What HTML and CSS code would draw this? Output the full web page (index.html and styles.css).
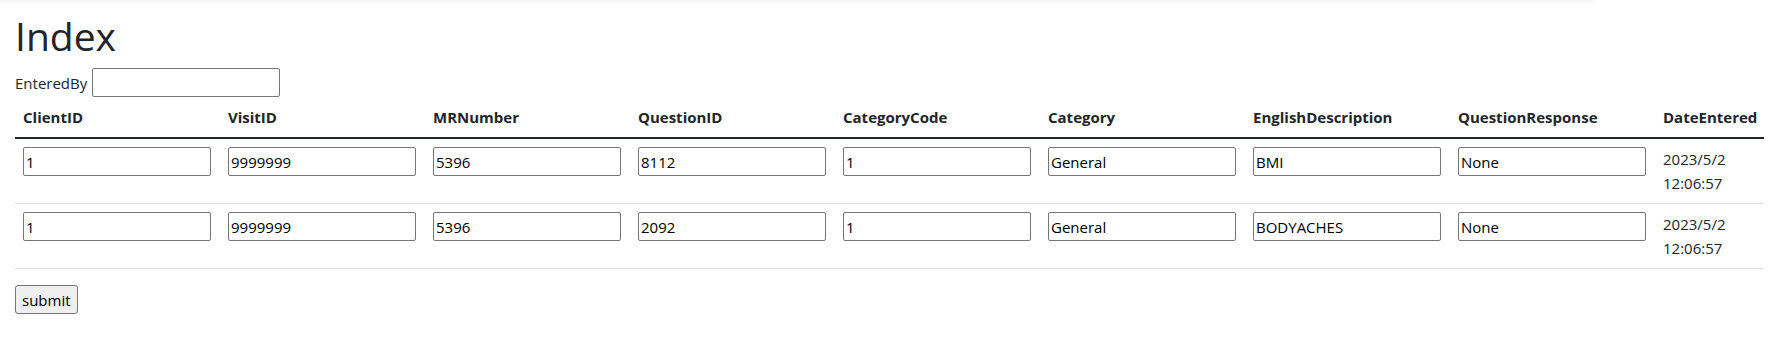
FILE: index.html
```html
<!DOCTYPE html>
<html lang="en">
<head>
    <meta charset="UTF-8">
    <meta name="viewport" content="width=device-width, initial-scale=1.0">
    <title>Index</title>
    <link rel="stylesheet" href="styles.css">
</head>
<body>
    <div class="top-shade"></div>
    <div class="container">
        <h1>Index</h1>
        <form class="entry-form">
            <div class="entered-by">
                <label for="entered-by">EnteredBy</label>
                <input type="text" id="entered-by" class="field-short">
            </div>
            <table class="question-table">
                <colgroup>
                    <col class="col-field"><col class="col-field"><col class="col-field">
                    <col class="col-field"><col class="col-field"><col class="col-field">
                    <col class="col-field"><col class="col-field"><col class="col-date">
                </colgroup>
                <thead>
                    <tr>
                        <th>ClientID</th>
                        <th>VisitID</th>
                        <th>MRNumber</th>
                        <th>QuestionID</th>
                        <th>CategoryCode</th>
                        <th>Category</th>
                        <th>EnglishDescription</th>
                        <th>QuestionResponse</th>
                        <th>DateEntered</th>
                    </tr>
                </thead>
                <tbody>
                    <tr>
                        <td><input type="text" value="1"></td>
                        <td><input type="text" value="9999999"></td>
                        <td><input type="text" value="5396"></td>
                        <td><input type="text" value="8112"></td>
                        <td><input type="text" value="1"></td>
                        <td><input type="text" value="General"></td>
                        <td><input type="text" value="BMI"></td>
                        <td><input type="text" value="None"></td>
                        <td>2023/5/2 12:06:57</td>
                    </tr>
                    <tr>
                        <td><input type="text" value="1"></td>
                        <td><input type="text" value="9999999"></td>
                        <td><input type="text" value="5396"></td>
                        <td><input type="text" value="2092"></td>
                        <td><input type="text" value="1"></td>
                        <td><input type="text" value="General"></td>
                        <td><input type="text" value="BODYACHES"></td>
                        <td><input type="text" value="None"></td>
                        <td>2023/5/2 12:06:57</td>
                    </tr>
                </tbody>
            </table>
            <button type="button" class="submit-button">submit</button>
        </form>
    </div>
</body>
</html>
```

FILE: styles.css
```css
body, html {
    margin: 0;
    font-family: "Segoe UI", "Open Sans", "Noto Sans", sans-serif;
    font-size: 15px;
    line-height: 24px;
    color: #212529;
    background-color: #fff;
}
.top-shade {
    width: 1595px;
    height: 6px;
    background: linear-gradient(to bottom, rgba(0, 0, 0, 0.035), rgba(0, 0, 0, 0));
}
.container {
    padding: 0 10px 0 15px;
}
h1 {
    font-size: 39px;
    font-weight: 500;
    line-height: 48px;
    margin: 6px 0 8px;
}
.entered-by {
    display: flex;
    align-items: center;
    gap: 5px;
    height: 29px;
}
input {
    box-sizing: border-box;
    width: 188px;
    height: 29px;
    padding: 1px 2px;
    border: 1px solid #767676;
    border-radius: 2px;
    font-family: inherit;
    font-size: 15px;
    color: #000;
    background: #fff;
}
.question-table {
    width: 1749px;
    table-layout: fixed;
    border-collapse: collapse;
    margin-bottom: 16px;
}
.col-field {
    width: 205px;
}
.col-date {
    width: 109px;
}
.question-table th {
    text-align: left;
    vertical-align: bottom;
    padding: 8px;
    font-weight: bold;
    border-bottom: 2px solid #212529;
}
.question-table td {
    vertical-align: top;
    padding: 8px;
    border-bottom: 1px solid #dee2e6;
}
.submit-button {
    box-sizing: border-box;
    height: 29px;
    padding: 1px 6px;
    font-family: inherit;
    font-size: 15px;
    color: #000;
    background-color: #efefef;
    border: 1px solid #767676;
    border-radius: 3px;
}
```
